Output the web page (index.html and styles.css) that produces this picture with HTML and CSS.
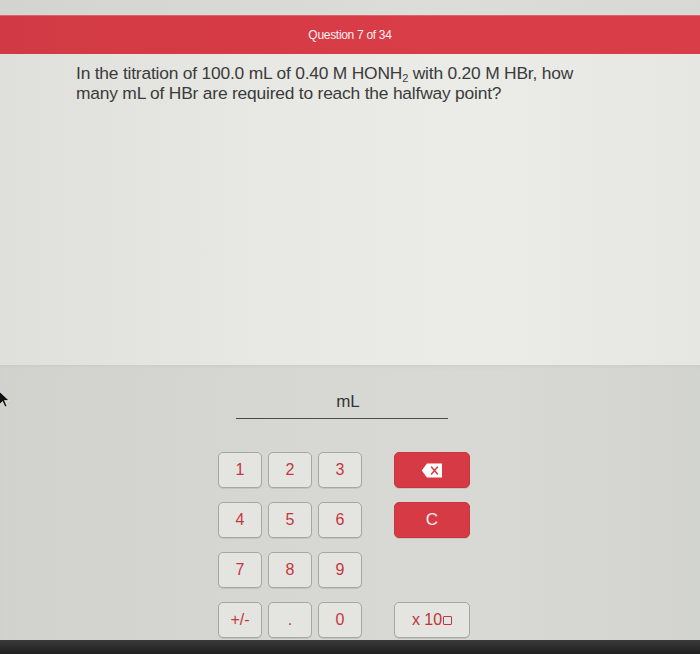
FILE: index.html
```html
<!DOCTYPE html>
<html lang="en">
<head>
<meta charset="utf-8">
<title>Question 7 of 34</title>
<link rel="stylesheet" href="styles.css">
</head>
<body>
<div class="screen">
  <div class="top-strip"></div>
  <header class="q-header">Question 7 of 34</header>
  <section class="question">
    <p>In the titration of 100.0 mL of 0.40 M HONH<sub>2</sub> with 0.20 M HBr, how many mL of HBr are required to reach the halfway point?</p>
  </section>
  <section class="answer">
    <svg class="cursor" width="12" height="18" viewBox="0 0 12 18"><path d="M0 0 L0 14 L3.5 10.5 L6 16 L8 15 L5.5 9.5 L10 9.5 Z" fill="#111" stroke="#fff" stroke-width="0.6"/></svg>
    <div class="unit">mL</div>
    <div class="entry-line"></div>
    <div class="keypad">
      <button class="key key-first">1</button>
      <button class="key">2</button>
      <button class="key">3</button>
      <button class="key key-red key-side">
        <svg width="22" height="15" viewBox="0 0 22 15"><path d="M6 0.5 H21 V14.5 H6 L0.8 7.5 Z" fill="#fff"/><path d="M10.5 4 L16.5 11 M16.5 4 L10.5 11" stroke="#d63b45" stroke-width="1.5" stroke-linecap="round"/></svg>
      </button>
      <button class="key key-first">4</button>
      <button class="key">5</button>
      <button class="key">6</button>
      <button class="key key-red key-side">C</button>
      <button class="key key-first">7</button>
      <button class="key">8</button>
      <button class="key">9</button>
      <button class="key key-first">+/-</button>
      <button class="key">.</button>
      <button class="key">0</button>
      <button class="key key-side key-exp">x 10<span class="box"></span></button>
    </div>
  </section>
  <div class="bezel"></div>
</div>
</body>
</html>
```
FILE: styles.css
```css
html, body {
  margin: 0;
  padding: 0;
}

body {
  width: 700px;
  height: 654px;
  overflow: hidden;
  font-family: "Liberation Sans", Arial, sans-serif;
  background: #d6d7d2;
}

.screen {
  display: flex;
  flex-direction: column;
  height: 654px;
}

.top-strip {
  height: 15px;
  background: linear-gradient(90deg, #d3d4cf, #dcddd8 60%, #d8d9d4);
}

.q-header {
  height: 39px;
  display: flex;
  align-items: center;
  justify-content: center;
  background: linear-gradient(90deg, #d13a44, #d83c46 50%, #d93d47);
  color: #fdf1f1;
  font-size: 12px;
  letter-spacing: -0.3px;
  box-shadow: inset 0 1px 0 #e0636a;
}

.question {
  height: 311px;
  padding: 9px 0 0 76px;
  box-sizing: border-box;
  background: linear-gradient(90deg, #dfe0db 0%, #e8e9e4 40%, #ebece7 70%, #e6e7e2 100%);
}

.question p {
  margin: 0;
  width: 520px;
  font-size: 17.4px;
  line-height: 20px;
  color: #3b3b3b;
  letter-spacing: -0.2px;
}

.question sub {
  font-size: 11px;
  line-height: 1;
  position: relative;
  top: 3px;
  vertical-align: baseline;
}

.answer {
  position: relative;
  flex: 1;
  background: linear-gradient(90deg, #d1d2cd 0%, #d7d8d3 45%, #d8d9d4 70%, #d3d4cf 100%);
  box-shadow: inset 0 3px 4px -2px #c9cac5;
  padding-top: 27px;
  box-sizing: border-box;
}

.cursor {
  position: absolute;
  left: -1px;
  top: 26px;
}

.unit {
  width: 212px;
  margin-left: 242px;
  text-align: center;
  font-size: 17px;
  line-height: 19px;
  color: #363636;
}

.entry-line {
  width: 212px;
  margin: 7px 0 0 236px;
  border-top: 1.5px solid #4a4a4a;
}

.keypad {
  display: grid;
  grid-template-columns: 44px 44px 44px 20px 76px;
  grid-auto-rows: 36px;
  column-gap: 6px;
  row-gap: 14px;
  margin: 33px 0 0 218px;
}

.key {
  margin: 0;
  padding: 0;
  border: 1px solid #a6a7a2;
  border-radius: 5px;
  background: #e4e5e0;
  color: #c7363e;
  font-family: "Liberation Sans", Arial, sans-serif;
  font-size: 16px;
  display: flex;
  align-items: center;
  justify-content: center;
  box-shadow: 0 1px 0 #c4c5c0;
}

.key-first {
  grid-column: 1;
}

.key-side {
  grid-column: 5;
}

.key-red {
  background: #d63b45;
  border-color: #c9353f;
  color: #fbeeee;
  font-size: 17px;
}

.key-exp {
  font-size: 16px;
  color: #c2333b;
}

.box {
  display: inline-block;
  width: 7px;
  height: 7px;
  margin-left: 1px;
  border: 1.3px solid #c7363e;
  border-radius: 1px;
}

.bezel {
  height: 14px;
  background: linear-gradient(180deg, #3a3a3a, #1f1f1f);
}
```
